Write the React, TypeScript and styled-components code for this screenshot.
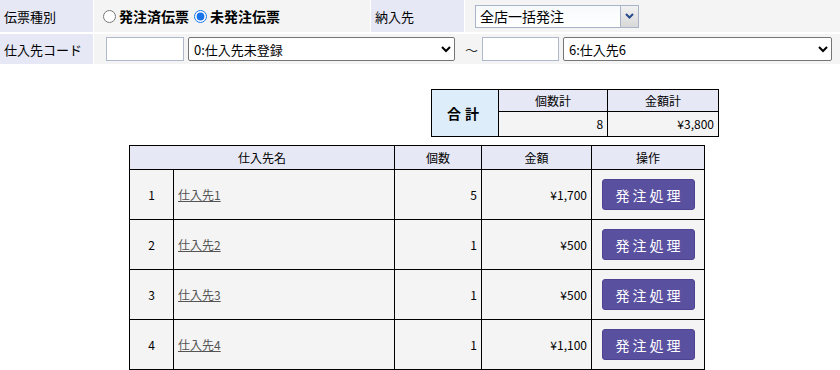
import React from "react";
import styled, { createGlobalStyle } from "styled-components";

const Global = createGlobalStyle`
  html, body { margin: 0; padding: 0; background: #ffffff; }
  body { font-family: "Noto Sans CJK JP", "Noto Sans", sans-serif; color: #000; font-size: 13px; }
`;

const Page = styled.div`
  width: 840px;
`;

const Form = styled.div`
  display: flex;
  flex-direction: column;
  gap: 2px;
  background: #ffffff;
`;

const FormRow = styled.div<{ $h: number }>`
  display: flex;
  height: ${(p) => p.$h}px;
  gap: 1px;
`;

const Label = styled.div<{ $w: number }>`
  width: ${(p) => p.$w}px;
  flex: none;
  background: #e6e8f5;
  display: flex;
  align-items: center;
  padding-left: 4px;
  box-sizing: border-box;
  font-size: 13px;
  line-height: 1;
`;

const Field = styled.div<{ $w?: number; $pl?: number }>`
  ${(p) => (p.$w ? `width: ${p.$w}px; flex: none;` : "flex: 1;")}
  background: #f4f4f4;
  display: flex;
  align-items: center;
  padding-left: ${(p) => p.$pl ?? 0}px;
  box-sizing: border-box;
`;

const RadioLabel = styled.label`
  display: inline-flex;
  align-items: center;
  font-weight: bold;
  font-size: 14px;
  line-height: 1;
  margin-right: 5px;
  input {
    margin: 0 3px 0 0;
    width: 13px;
    height: 13px;
    accent-color: #1a73e8;
  }
`;

const OldSelect = styled.div`
  display: flex;
  width: 164px;
  height: 23px;
  border: 1px solid #aab4c8;
  box-sizing: border-box;
  background: #fff;
`;

const OldSelectText = styled.div`
  flex: 1;
  display: flex;
  align-items: center;
  padding-left: 4px;
  font-size: 14px;
  line-height: 1;
  background: linear-gradient(#f7fafc, #ffffff);
`;

const OldSelectButton = styled.div`
  width: 17px;
  border-left: 1px solid #aab4c8;
  background: linear-gradient(#f2f2f2, #d8d8d8);
  display: flex;
  align-items: center;
  justify-content: center;
`;

const TextInput = styled.input<{ $w: number }>`
  width: ${(p) => p.$w}px;
  height: 24px;
  box-sizing: border-box;
  border: 1px solid #b0b8cc;
  background: #fff;
  padding: 0 3px;
  margin: 0 4px 0 0;
  font-family: inherit;
`;

const Select = styled.select<{ $w: number }>`
  width: ${(p) => p.$w}px;
  height: 24px;
  box-sizing: border-box;
  border: 1px solid #767676;
  border-radius: 2px;
  background: #fff;
  font-family: inherit;
  font-size: 13px;
  padding: 0 1px;
  margin: 0;
  color: #000;
`;

const Tilde = styled.span`
  margin: 0 4px 0 10px;
  font-size: 13px;
  color: #333;
`;

const SumTable = styled.table`
  border-collapse: collapse;
  margin: 25px 0 0 431px;
  width: 288px;
  font-size: 12px;
  line-height: 1;
  td, th {
    border: 1px solid #000;
    padding: 0 4px;
  }
  th {
    font-weight: normal;
    background: #e6e8f5;
    height: 21px;
    text-align: center;
  }
  td {
    background: #f4f4f4;
    height: 24px;
    text-align: right;
  }
`;

const TotalCell = styled.th`
  && {
    background: #ddeefa;
    font-weight: bold;
    font-size: 14px;
    width: 58px;
    letter-spacing: 4px;
  }
`;

const MainTable = styled.table`
  border-collapse: collapse;
  margin: 8px 0 0 129px;
  width: 576px;
  font-size: 12px;
  line-height: 1;
  td, th {
    border: 1px solid #000;
    padding: 0 4px;
  }
  th {
    font-weight: normal;
    background: #e6e8f5;
    height: 23px;
    text-align: center;
  }
  td {
    background: #f4f4f4;
    height: 49px;
  }
`;

const Cell = styled.td<{ $align: string }>`
  text-align: ${(p) => p.$align};
`;

const Link = styled.a`
  color: #555;
  text-decoration: underline;
  font-size: 12px;
`;

const OrderButton = styled.button`
  display: block;
  margin: 0 auto;
  width: 93px;
  height: 31px;
  border: 1px solid #4c4290;
  border-radius: 3px;
  background: #5a50a0;
  color: #fff;
  font-family: inherit;
  font-size: 14px;
  letter-spacing: 3px;
  padding: 0 0 0 3px;
  cursor: pointer;
`;

const rows = [
  { no: 1, name: "仕入先1", qty: 5, amount: "¥1,700" },
  { no: 2, name: "仕入先2", qty: 1, amount: "¥500" },
  { no: 3, name: "仕入先3", qty: 1, amount: "¥500" },
  { no: 4, name: "仕入先4", qty: 1, amount: "¥1,100" },
];

export default function App() {
  return (
    <Page>
      <Global />
      <Form>
        <FormRow $h={32}>
          <Label $w={93}>伝票種別</Label>
          <Field $w={276} $pl={9}>
            <RadioLabel>
              <input type="radio" name="kind" readOnly />
              発注済伝票
            </RadioLabel>
            <RadioLabel>
              <input type="radio" name="kind" defaultChecked />
              未発注伝票
            </RadioLabel>
          </Field>
          <Label $w={93}>納入先</Label>
          <Field $pl={10}>
            <OldSelect>
              <OldSelectText>全店一括発注</OldSelectText>
              <OldSelectButton>
                <svg width="9" height="6" viewBox="0 0 9 6">
                  <path d="M1 1 L4.5 4.5 L8 1" stroke="#2a4a8a" strokeWidth="2" fill="none" />
                </svg>
              </OldSelectButton>
            </OldSelect>
          </Field>
        </FormRow>
        <FormRow $h={30}>
          <Label $w={93}>仕入先コード</Label>
          <Field $pl={12}>
            <TextInput $w={78} type="text" />
            <Select $w={267} defaultValue="0">
              <option value="0">0:仕入先未登録</option>
            </Select>
            <Tilde>～</Tilde>
            <TextInput $w={77} type="text" />
            <Select $w={269} defaultValue="6">
              <option value="6">6:仕入先6</option>
            </Select>
          </Field>
        </FormRow>
      </Form>

      <SumTable>
        <tbody>
          <tr>
            <TotalCell rowSpan={2}>合計</TotalCell>
            <th>個数計</th>
            <th>金額計</th>
          </tr>
          <tr>
            <td>8</td>
            <td>¥3,800</td>
          </tr>
        </tbody>
      </SumTable>

      <MainTable>
        <colgroup>
          <col style={{ width: 44 }} />
          <col style={{ width: 221 }} />
          <col style={{ width: 87 }} />
          <col style={{ width: 110 }} />
          <col style={{ width: 113 }} />
        </colgroup>
        <thead>
          <tr>
            <th colSpan={2}>仕入先名</th>
            <th>個数</th>
            <th>金額</th>
            <th>操作</th>
          </tr>
        </thead>
        <tbody>
          {rows.map((r) => (
            <tr key={r.no}>
              <Cell $align="center">{r.no}</Cell>
              <Cell $align="left">
                <Link href="#">{r.name}</Link>
              </Cell>
              <Cell $align="right">{r.qty}</Cell>
              <Cell $align="right">{r.amount}</Cell>
              <Cell $align="center">
                <OrderButton>発注処理</OrderButton>
              </Cell>
            </tr>
          ))}
        </tbody>
      </MainTable>
    </Page>
  );
}
